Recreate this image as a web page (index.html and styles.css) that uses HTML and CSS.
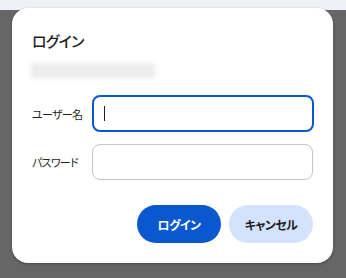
FILE: index.html
```html
<!DOCTYPE html>
<html lang="ja">
<head>
<meta charset="utf-8">
<link rel="stylesheet" href="styles.css">
</head>
<body>
<div class="topbar"></div>
<div class="dialog">
  <h1 class="title">ログイン</h1>
  <div class="blurred"></div>
  <div class="form">
    <div class="row">
      <label class="label">ユーザー名</label>
      <div class="field focused"><span class="caret"></span></div>
    </div>
    <div class="row">
      <label class="label">パスワード</label>
      <div class="field"></div>
    </div>
  </div>
  <div class="actions">
    <button class="btn primary">ログイン</button>
    <button class="btn secondary">キャンセル</button>
  </div>
</div>
</body>
</html>
```
FILE: styles.css
```css
* { box-sizing: border-box; }
html, body { margin: 0; height: 100%; }
body {
  background: #666666;
  font-family: "Noto Sans CJK JP", "Noto Sans", sans-serif;
  font-feature-settings: "palt";
  color: #1f1f1f;
  overflow: hidden;
}
.topbar {
  height: 10px;
  background: #eef1f8;
}
.dialog {
  position: absolute;
  left: 12px;
  top: 8px;
  width: 321px;
  height: 255px;
  background: #ffffff;
  border-radius: 16px;
  box-shadow: 0 1px 3px rgba(0,0,0,0.3);
  padding: 23px 20px 20px 20px;
  display: flex;
  flex-direction: column;
}
.title {
  margin: 0;
  font-size: 15px;
  line-height: 20px;
  font-weight: 500;
  letter-spacing: -0.8px;
  color: #1f1f1f;
}
.blurred {
  margin-top: 12px;
  width: 124px;
  height: 16px;
  margin-left: -1px;
  background: #ececec;
  filter: blur(2px);
}
.form {
  margin-top: 17px;
  display: flex;
  flex-direction: column;
  gap: 12px;
}
.row {
  display: grid;
  grid-template-columns: 60px 1fr;
  align-items: center;
}
.label {
  font-size: 11px;
  letter-spacing: -0.7px;
  color: #1f1f1f;
}
.field {
  height: 36px;
  border: 1px solid #c4c7c5;
  border-radius: 8px;
  display: flex;
  align-items: center;
  padding: 0 10px;
}
.field.focused {
  height: 37px;
  border: 2px solid #0b57d0;
  margin-right: -1px;
}
.caret {
  width: 1px;
  height: 15px;
  background: #1f1f1f;
}
.actions {
  margin-top: 25px;
  display: flex;
  justify-content: flex-end;
  gap: 8px;
}
.btn {
  width: 84px;
  height: 38px;
  border: none;
  border-radius: 19px;
  font-family: inherit;
  font-feature-settings: "palt";
  font-size: 12px;
  letter-spacing: -0.6px;
  font-weight: 700;
  padding: 0;
}
.primary {
  background: #0b57d0;
  color: #ffffff;
}
.secondary {
  background: #d3e3fd;
  color: #1f1f1f;
}
```
